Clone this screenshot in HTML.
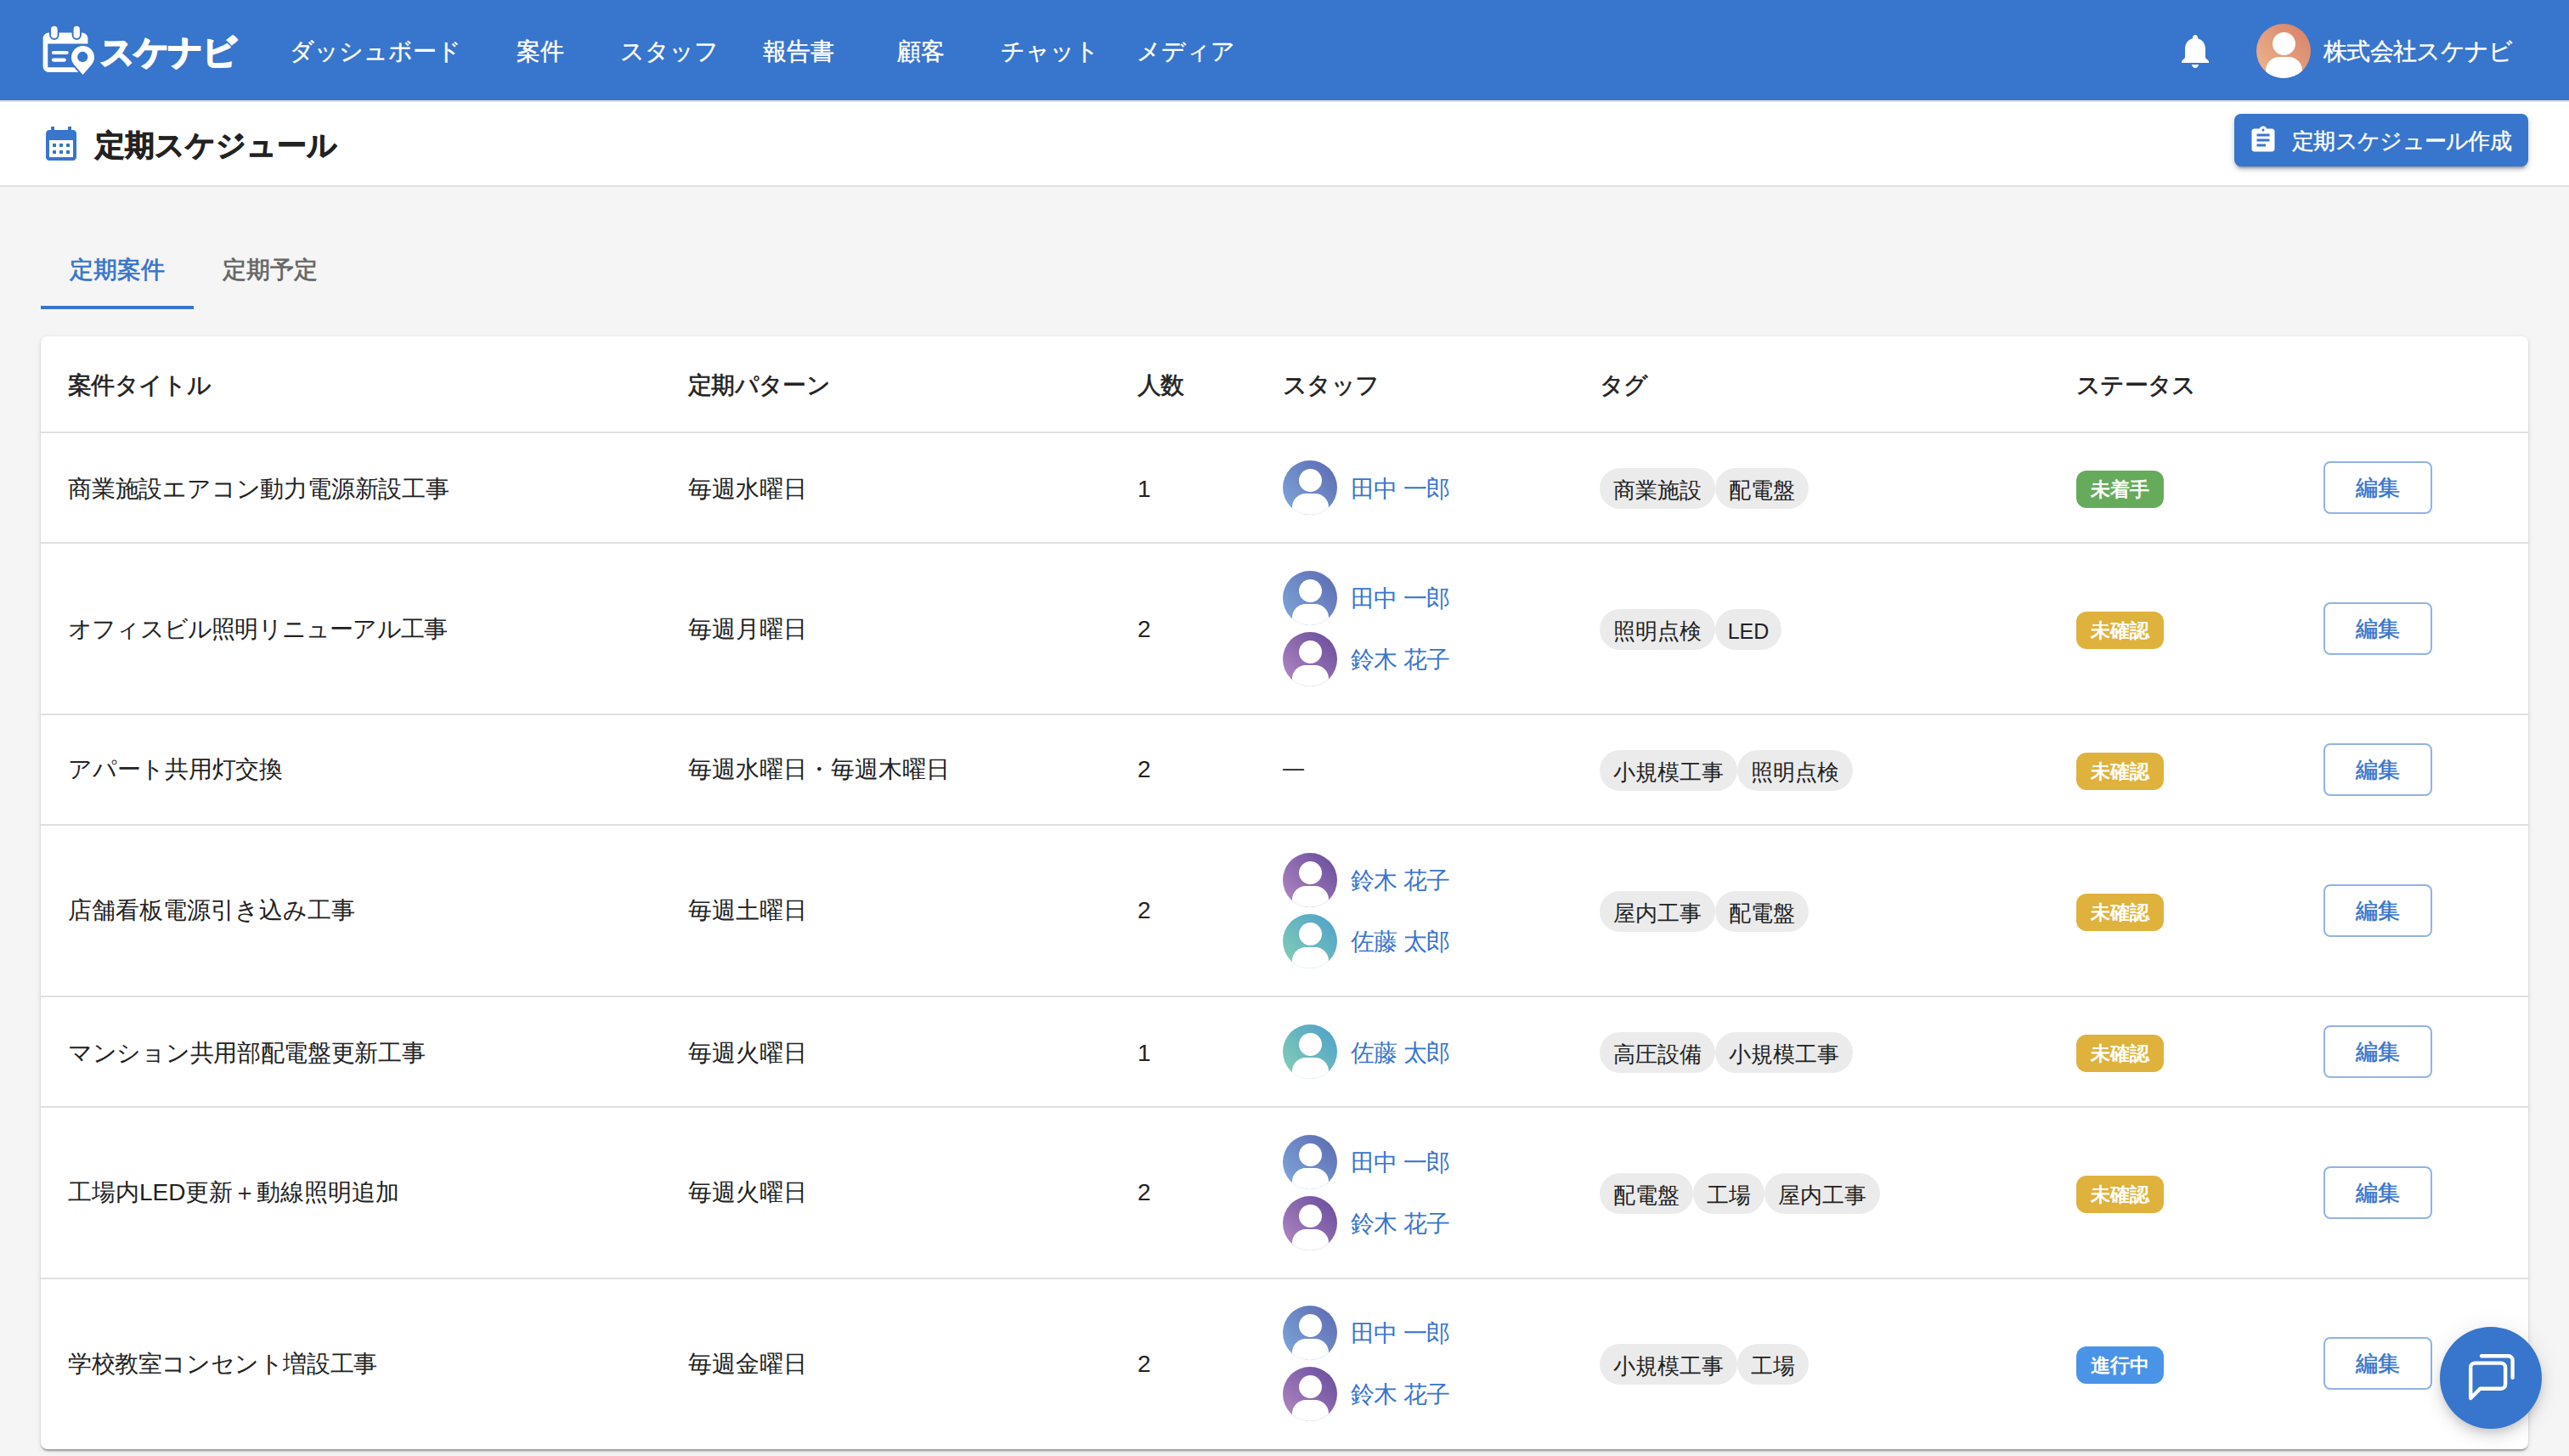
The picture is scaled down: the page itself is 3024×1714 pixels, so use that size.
<!DOCTYPE html>
<html lang="ja">
<head>
<meta charset="utf-8">
<style>
*{box-sizing:border-box;margin:0;padding:0}
html,body{width:3024px;height:1714px;overflow:hidden}
body{background:#f5f5f5;font-family:"Liberation Sans",sans-serif;color:#222;position:relative}
.hdr{position:absolute;left:0;top:0;width:3024px;height:120px;background:#3875cc;border-bottom:2px solid #dfdedc}
.logo{position:absolute;left:44px;top:26px;width:72px;height:66px}
.logotext{position:absolute;left:118px;top:33px;font-size:40px;font-weight:bold;color:#fff;line-height:56px;letter-spacing:-1px;-webkit-text-stroke:2px #fff}
.nav{position:absolute;top:39px;height:44px;line-height:44px;font-size:28px;color:#fff;text-align:center;-webkit-text-stroke:0.4px #fff}
.bell{position:absolute;left:2560px;top:36px;width:48px;height:48px}
.av{position:absolute;width:64px;height:64px;border-radius:50%;overflow:hidden}
.av i{position:absolute;left:18.5px;top:9.5px;width:27px;height:27px;border-radius:50%;background:#fff}
.av b{position:absolute;left:10.5px;top:38.5px;width:43px;height:40px;border-radius:16px 16px 4px 4px;background:#fff}
.company{position:absolute;left:2735px;top:39px;line-height:44px;font-size:28px;color:#fff;letter-spacing:-0.7px;-webkit-text-stroke:0.4px #fff}
.sub{position:absolute;left:0;top:120px;width:3024px;height:100px;background:#fff;border-bottom:2px solid #e0e0e0}
.calicon{position:absolute;left:48px;top:145px;width:48px;height:48px}
.title{position:absolute;left:112px;top:148px;line-height:46px;font-size:35px;font-weight:bold;color:#222;-webkit-text-stroke:0.8px #222}
.cbtn{position:absolute;left:2630px;top:134px;width:346px;height:62px;border-radius:8px;background:#3875cc;box-shadow:0 6px 2px -4px rgba(0,0,0,.2),0 4px 4px 0 rgba(0,0,0,.14),0 2px 10px 0 rgba(0,0,0,.12)}
.cbtn span{position:absolute;left:68px;top:1px;-webkit-text-stroke:0.4px #fff;line-height:62px;font-size:26px;color:#fff;white-space:nowrap;letter-spacing:-0.7px}
.tab{position:absolute;top:270px;width:180px;height:96px;line-height:96px;text-align:center;font-size:28px;-webkit-text-stroke:0.7px currentColor}
.tabline{position:absolute;left:48px;top:360px;width:180px;height:4px;background:#3875cc}
.card{position:absolute;left:48px;top:396px;width:2928px;height:1310px;background:#fff;border-radius:8px;box-shadow:0 4px 2px -2px rgba(0,0,0,.2),0 2px 2px 0 rgba(0,0,0,.14),0 2px 6px 0 rgba(0,0,0,.12);overflow:hidden}
table{border-collapse:collapse;table-layout:fixed;width:2928px}
td,th{padding:0 32px;text-align:left;vertical-align:middle;border-bottom:2px solid #e0e0e0;font-size:28px;white-space:nowrap}
th{height:113px;font-weight:normal;color:#222;padding-top:4px;-webkit-text-stroke:0.6px #222;letter-spacing:-0.7px}
td{color:#222}
tr.s td{height:130px}
tr.d td{height:202px}
tr.r3 td{height:129px}
tr.last td{border-bottom:none;height:199px}
.st{display:flex;align-items:center;height:64px;position:relative}
.st + .st{margin-top:8px}
.st .av{position:relative}
.st span{margin-left:16px;color:#3875cc;font-size:28px;position:relative;top:2px;letter-spacing:-0.7px}
tr.d .st span{top:1px}
.tx{position:relative;top:2px}
.chip{position:relative;top:1px;display:inline-block;height:48px;line-height:44px;padding:4px 16px 0;border-radius:24px;background:#ebebeb;font-size:26px;color:#222;vertical-align:middle}
.badge{position:relative;top:2px;display:inline-block;height:44px;line-height:44px;padding:0 17px;border-radius:12px;font-size:23px;font-weight:bold;color:#fff}
.g{background:#66ab5c}.y{background:#dfb23d}.b{background:#4a94e8}
.edit{display:inline-block;width:128px;height:62px;line-height:58px;text-align:center;border:2px solid rgba(56,117,204,.55);border-radius:8px;color:#3875cc;font-size:26px;-webkit-text-stroke:0.5px #3875cc}
.av.t{background:linear-gradient(45deg,#80aadd,#5c68b0)}.av.u{background:linear-gradient(45deg,#b48ac4,#654a9a)}.av.a{background:linear-gradient(45deg,#88d0b4,#4c9fcb)}
.tags{font-size:0;white-space:nowrap}
.dash{color:#222;position:relative;top:-2px;font-size:25px}
.chip.led{font-size:25px;width:78px;text-align:center;padding:4px 0 0}
.chip.led b{position:relative;top:0;font-weight:normal}
.fab{position:absolute;left:2872px;top:1562px;width:120px;height:120px;border-radius:50%;background:#3875cc;box-shadow:0 6px 10px -2px rgba(0,0,0,.12),0 10px 18px 0 rgba(0,0,0,.08),0 2px 30px 0 rgba(0,0,0,.08)}
</style>
</head>
<body>
<div class="hdr">
  <svg class="logo" viewBox="0 0 72 66" width="72" height="66">
    <path fill="#fff" d="M6.6 19.3a6.8 6.8 0 0 1 6.8-6.8H52.6a6.8 6.8 0 0 1 6.8 6.8V25.6H12.24V53.3H50V58.9H13.4a6.8 6.8 0 0 1-6.8-6.8Z"/>
    <rect x="14.1" y="2.76" width="11.5" height="18.24" rx="5.75" fill="#3875cc"/>
    <rect x="40.6" y="2.76" width="11.3" height="18.24" rx="5.65" fill="#3875cc"/>
    <rect x="16.1" y="4.76" width="7.5" height="14.24" rx="3.75" fill="#fff"/>
    <rect x="42.6" y="4.76" width="7.3" height="14.24" rx="3.65" fill="#fff"/>
    <rect x="16.8" y="34" width="19.9" height="4.1" rx="2.05" fill="#fff"/>
    <rect x="16.8" y="42.5" width="17" height="4.2" rx="2.1" fill="#fff"/>
    <path d="M53.5 61.9L43.24 50.29A13.5 13.5 0 1 1 63.76 50.29Z" fill="#3875cc" stroke="#3875cc" stroke-width="4" stroke-linejoin="round"/>
    <path d="M53.5 61.9L43.24 50.29A13.5 13.5 0 1 1 63.76 50.29Z" fill="#fff"/>
    <circle cx="53.25" cy="41" r="6.15" fill="#3875cc"/>
  </svg>
  <div class="logotext">スケナビ</div>
  <div class="nav" style="left:328px;width:228px">ダッシュボード</div>
  <div class="nav" style="left:572px;width:128px">案件</div>
  <div class="nav" style="left:716px;width:144px">スタッフ</div>
  <div class="nav" style="left:876px;width:128px">報告書</div>
  <div class="nav" style="left:1020px;width:128px">顧客</div>
  <div class="nav" style="left:1164px;width:144px">チャット</div>
  <div class="nav" style="left:1324px;width:144px">メディア</div>
  <svg class="bell" viewBox="0 0 24 24"><path fill="#fff" d="M12 22c1.1 0 2-.9 2-2h-4c0 1.1.89 2 2 2zm6-6v-5c0-3.07-1.64-5.64-4.5-6.32V4c0-.83-.67-1.5-1.5-1.5s-1.5.67-1.5 1.5v.68C7.63 5.36 6 7.92 6 11v5l-2 2v1h16v-1l-2-2z"/></svg>
  <div class="av" style="left:2656px;top:28px;background:linear-gradient(45deg,#edb891,#d77f66)"><i></i><b></b></div>
  <div class="company">株式会社スケナビ</div>
</div>
<div class="sub">
</div>
<svg class="calicon" viewBox="0 0 24 24"><path fill="#3875cc" d="M19 4h-1V2h-2v2H8V2H6v2H5c-1.11 0-1.99.9-1.99 2L3 20c0 1.1.89 2 2 2h14c1.1 0 2-.9 2-2V6c0-1.1-.9-2-2-2zm0 16H5V10h14v10zM9 14H7v-2h2v2zm4 0h-2v-2h2v2zm4 0h-2v-2h2v2zm-8 4H7v-2h2v2zm4 0h-2v-2h2v2zm4 0h-2v-2h2v2z"/></svg>
<div class="title">定期スケジュール</div>
<div class="cbtn">
  <svg style="position:absolute;left:15.5px;top:12.5px" width="36" height="36" viewBox="0 0 24 24"><path fill="#fff" d="M19 3h-4.18C14.4 1.84 13.3 1 12 1c-1.3 0-2.4.84-2.82 2H5c-1.1 0-2 .9-2 2v14c0 1.1.9 2 2 2h14c1.1 0 2-.9 2-2V5c0-1.1-.9-2-2-2zm-7 0c.55 0 1 .45 1 1s-.45 1-1 1-1-.45-1-1 .45-1 1-1zm2 14H7v-2h7v2zm3-4H7v-2h10v2zm0-4H7V7h10v2z"/></svg>
  <span>定期スケジュール作成</span>
</div>
<div class="tab" style="left:48px;color:#3875cc">定期案件</div>
<div class="tab" style="left:228px;color:#666">定期予定</div>
<div class="tabline"></div>

<div class="card">
<table>
<colgroup><col style="width:730px"><col style="width:529px"><col style="width:171px"><col style="width:373px"><col style="width:561px"><col style="width:291px"><col style="width:273px"></colgroup>
<tr><th>案件タイトル</th><th>定期パターン</th><th>人数</th><th>スタッフ</th><th>タグ</th><th>ステータス</th><th></th></tr>
<tr class="s"><td><span class="tx" style="letter-spacing:-0.2px;top:2px">商業施設エアコン動力電源新設工事</span></td><td><span class="tx" style="top:2px">毎週水曜日</span></td><td><span class="tx" style="top:2px">1</span></td><td><div class="st"><div class="av t"><i></i><b></b></div><span>田中 一郎</span></div></td><td><div class="tags"><span class="chip">商業施設</span><span class="chip">配電盤</span></div></td><td><span class="badge g">未着手</span></td><td><span class="edit">編集</span></td></tr>
<tr class="d"><td><span class="tx" style="letter-spacing:-0.8px;top:1px">オフィスビル照明リニューアル工事</span></td><td><span class="tx" style="top:1px">毎週月曜日</span></td><td><span class="tx" style="top:1px">2</span></td><td><div class="st"><div class="av t"><i></i><b></b></div><span>田中 一郎</span></div><div class="st"><div class="av u"><i></i><b></b></div><span>鈴木 花子</span></div></td><td><div class="tags"><span class="chip">照明点検</span><span class="chip led"><b>LED</b></span></div></td><td><span class="badge y">未確認</span></td><td><span class="edit">編集</span></td></tr>
<tr class="s"><td><span class="tx" style="letter-spacing:-0.25px;top:0px">アパート共用灯交換</span></td><td><span class="tx" style="top:0px">毎週水曜日・毎週木曜日</span></td><td><span class="tx" style="top:0px">2</span></td><td><span class="dash">—</span></td><td><div class="tags"><span class="chip">小規模工事</span><span class="chip">照明点検</span></div></td><td><span class="badge y">未確認</span></td><td><span class="edit">編集</span></td></tr>
<tr class="d"><td><span class="tx" style="letter-spacing:0px;top:0px">店舗看板電源引き込み工事</span></td><td><span class="tx" style="top:0px">毎週土曜日</span></td><td><span class="tx" style="top:0px">2</span></td><td><div class="st"><div class="av u"><i></i><b></b></div><span>鈴木 花子</span></div><div class="st"><div class="av a"><i></i><b></b></div><span>佐藤 太郎</span></div></td><td><div class="tags"><span class="chip">屋内工事</span><span class="chip">配電盤</span></div></td><td><span class="badge y">未確認</span></td><td><span class="edit">編集</span></td></tr>
<tr class="s"><td><span class="tx" style="letter-spacing:-0.3px;top:2px">マンション共用部配電盤更新工事</span></td><td><span class="tx" style="top:2px">毎週火曜日</span></td><td><span class="tx" style="top:2px">1</span></td><td><div class="st"><div class="av a"><i></i><b></b></div><span>佐藤 太郎</span></div></td><td><div class="tags"><span class="chip">高圧設備</span><span class="chip">小規模工事</span></div></td><td><span class="badge y">未確認</span></td><td><span class="edit">編集</span></td></tr>
<tr class="d"><td><span class="tx" style="letter-spacing:0px;top:0px">工場内LED更新＋動線照明追加</span></td><td><span class="tx" style="top:0px">毎週火曜日</span></td><td><span class="tx" style="top:0px">2</span></td><td><div class="st"><div class="av t"><i></i><b></b></div><span>田中 一郎</span></div><div class="st"><div class="av u"><i></i><b></b></div><span>鈴木 花子</span></div></td><td><div class="tags"><span class="chip">配電盤</span><span class="chip">工場</span><span class="chip">屋内工事</span></div></td><td><span class="badge y">未確認</span></td><td><span class="edit">編集</span></td></tr>
<tr class="d last"><td><span class="tx" style="letter-spacing:-0.4px;top:1px">学校教室コンセント増設工事</span></td><td><span class="tx" style="top:1px">毎週金曜日</span></td><td><span class="tx" style="top:1px">2</span></td><td><div class="st"><div class="av t"><i></i><b></b></div><span>田中 一郎</span></div><div class="st"><div class="av u"><i></i><b></b></div><span>鈴木 花子</span></div></td><td><div class="tags"><span class="chip">小規模工事</span><span class="chip">工場</span></div></td><td><span class="badge b">進行中</span></td><td><span class="edit">編集</span></td></tr>
</table>
</div>

<div class="fab"><svg width="120" height="120" viewBox="0 0 120 120" fill="none" stroke="#fff" stroke-width="4.4" stroke-linejoin="round" stroke-linecap="round"><path d="M36.2 84V47.6A5 5 0 0 1 41.2 42.6H72.1A5 5 0 0 1 77.1 47.6V67.7A5 5 0 0 1 72.1 72.7H47.4Z"/><path d="M49 34.3H80.6A5 5 0 0 1 85.6 39.3V59.7"/></svg></div>
</body>
</html>
